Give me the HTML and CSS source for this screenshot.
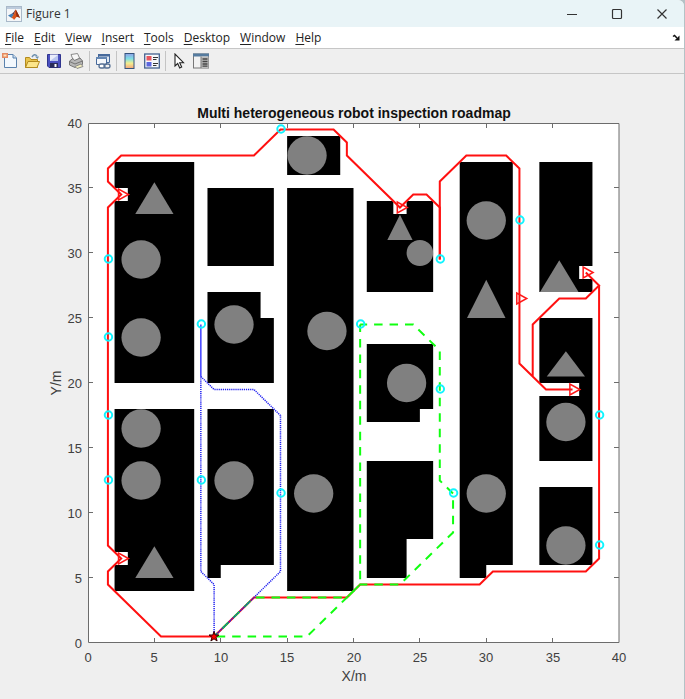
FILE: index.html
```html
<!DOCTYPE html>
<html lang="en">
<head>
<meta charset="utf-8">
<title>Figure 1</title>
<link rel="stylesheet" href="styles.css">
</head>
<body>
<div class="window">
  <header class="titlebar">
    <svg class="app-icon" viewBox="0 0 16 16" aria-hidden="true">
      <rect x=".5" y=".5" width="15" height="15" fill="#f4f6f8" stroke="#a9b9c9"/>
      <rect x="1" y="1" width="14" height="2" fill="#bccbdc"/>
      <path d="M2 9.5 6 7.5 8 9 5.5 12z" fill="#3f7eb4"/>
      <path d="M6 7.5Q8 6.500 9.500 3.500L8 9z" fill="#5a3a4c"/>
      <path d="M5.500 12Q8.500 8.500 9.500 3.500 11 5 14 12 12 10.500 10.500 11L8 14Q7.500 12 5.500 12z" fill="#d95319"/>
      <path d="M9.500 3.500Q11 5 14 12 11.500 10 10.500 10.500z" fill="#8c2c12"/>
    </svg>
    <h1 class="title">Figure 1</h1>
    <div class="window-controls">
      <button type="button" aria-label="Minimize"><svg viewBox="0 0 12 12"><path d="M1 6.500h10"/></svg></button>
      <button type="button" aria-label="Maximize"><svg viewBox="0 0 12 12"><rect x="1.500" y="1.500" width="9" height="9" rx="1"/></svg></button>
      <button type="button" aria-label="Close"><svg viewBox="0 0 12 12"><path d="M1.500 1.500l9 9M10.500 1.500l-9 9"/></svg></button>
    </div>
  </header>
  <nav class="menubar">
    <button type="button"><u>F</u>ile</button>
    <button type="button"><u>E</u>dit</button>
    <button type="button"><u>V</u>iew</button>
    <button type="button"><u>I</u>nsert</button>
    <button type="button"><u>T</u>ools</button>
    <button type="button"><u>D</u>esktop</button>
    <button type="button"><u>W</u>indow</button>
    <button type="button"><u>H</u>elp</button>
    <button type="button" class="dock" aria-label="Dock figure"><svg viewBox="0 0 8 8"><path d="M1 2.500 2.500 1.500 5 4" fill="none" stroke="#111" stroke-width="1.500"/><path d="M7.500 1.500V6.500H2.500z" fill="#111"/></svg></button>
  </nav>
  <div class="toolbar" role="toolbar" aria-label="Figure toolbar">
    <button type="button" aria-label="New figure"><svg viewBox="0 0 16 16">
      <path d="M2.500 1.500h8.500l3.500 3.500v9.500h-12z" fill="#f3f8fd" stroke="#5b82ad"/><path d="M11 1.500V5h3.500" fill="#c9dcee" stroke="#5b82ad"/>
      <path d="M0 0h6v5H0z" fill="#e58a62"/><path d="M1.500 1.500h3v2h-3z" fill="#ffe2b8"/></svg></button>
    <button type="button" aria-label="Open file"><svg viewBox="0 0 16 16">
      <path d="M1.500 14.500v-10h4l1.500 2h6.500v8z" fill="#e9c44c" stroke="#b38a1e"/><path d="M1.500 14.500 4 8.500h11.500l-2.500 6z" fill="#fce58a" stroke="#b38a1e"/>
      <path d="M8 4Q10.500 0 13 3" fill="none" stroke="#6d8fae" stroke-width="1.500"/><path d="M11 3.500h4L13.500 6z" fill="#6d8fae"/></svg></button>
    <button type="button" aria-label="Save figure"><svg viewBox="0 0 16 16">
      <path d="M1.500 1.500h13v13H3l-1.500-1.500z" fill="#4a50c0" stroke="#30358e"/><rect x="4" y="1.500" width="8" height="6.500" fill="#e9edfb"/><path d="M4 8 12 2v6z" fill="#b9c5ef"/>
      <rect x="4" y="10" width="8" height="4.500" fill="#292c59"/><rect x="8.500" y="11" width="2" height="3" fill="#fff"/></svg></button>
    <button type="button" aria-label="Print figure"><svg viewBox="0 0 16 16">
      <path d="M3 1.500 9.500.500 12 6 5.500 8z" fill="#f7f7f7" stroke="#8b8b8b"/><path d="M1.500 8 5 5.500l1.500 2L12 5l2.500 3v3.500L7 14.500 1.500 12z" fill="#b7b7b7" stroke="#777"/>
      <path d="M1.500 8.500 7 11l7.500-3" fill="none" stroke="#747474"/><path d="M7 13.500 13 11l2 2.500-6 2z" fill="#f3efc0" stroke="#8b8b8b"/></svg></button>
    <span class="separator"></span>
    <button type="button" aria-label="Link plot"><svg viewBox="0 0 16 16">
      <path d="M3.500 1.500h11v8h-11z" fill="#dfe8f2" stroke="#46699b"/><path d="M3 1h12v2.500H3z" fill="#46699b"/><path d="M1.500 4.500h10v7h-10z" fill="#f4f7fb" stroke="#46699b"/><path d="M1 4h11v2H1z" fill="#6386b3"/>
      <rect x="4" y="11" width="6" height="4" rx="2" fill="#fff" stroke="#536e93" stroke-width="1.300"/><rect x="9" y="11" width="6" height="4" rx="2" fill="none" stroke="#536e93" stroke-width="1.300"/></svg></button>
    <span class="separator"></span>
    <button type="button" aria-label="Insert colorbar"><svg viewBox="0 0 16 16">
      <defs><linearGradient id="bar" x1="0" y1="0" x2="0" y2="1"><stop offset="0" stop-color="#8fa0e8"/><stop offset=".35" stop-color="#7fe0e4"/><stop offset=".65" stop-color="#f3ee8e"/><stop offset="1" stop-color="#f3a27b"/></linearGradient></defs>
      <rect x="3" y=".5" width="9" height="15" fill="url(#bar)" stroke="#35537c"/></svg></button>
    <button type="button" aria-label="Insert legend"><svg viewBox="0 0 16 16">
      <rect x=".7" y="1" width="14.600" height="14" fill="#f7f9fc" stroke="#44618f" stroke-width="1.300"/><rect x="2.500" y="3" width="5" height="4.500" fill="#e8565e"/><rect x="2.500" y="9" width="5" height="4.500" fill="#5c66e0"/>
      <path d="M9 4.500h5M9 6.500h3.500M9 10.500h5M9 12.500h3.500" stroke="#333"/></svg></button>
    <span class="separator"></span>
    <button type="button" aria-label="Edit plot"><svg viewBox="0 0 16 16">
      <path d="M4 1v12l2.700-2.500 2 4.500 2-1-2-4.300H12.500z" fill="#fff" stroke="#222" stroke-width="1.100"/></svg></button>
    <button type="button" aria-label="Open property inspector"><svg viewBox="0 0 16 16">
      <rect x=".5" y="1" width="15" height="14" fill="#f1f1f1" stroke="#777"/><path d="M0 .500h16V3.500H0z" fill="#557b9f"/><path d="M8 3.500h7.500V15H8z" fill="#bdbdbd"/><path d="M8 3.500V15" stroke="#777"/>
      <path d="M9.500 6h5M9.500 8.500h5M9.500 11h5M9.500 13.200h5" stroke="#444" stroke-width="1.300"/></svg></button>
  </div>
  <main class="figure">
    <svg class="plot" viewBox="0 74 684 625" role="img" aria-label="Multi heterogeneous robot inspection roadmap">
      <defs>
        <ellipse id="waypoint" rx=".28" ry=".285"/>
        <path id="station" d="M-.2-.42V.42L.55 0z"/>
      </defs>
      <rect class="axes-area" x="88" y="123" width="531" height="520"/>
      <!-- Map content in metres, y axis pointing up -->
      <g transform="translate(88 643) scale(13.275 -13)">
        <g class="blocks">
          <path d="M2 20H8V37H2V35H3V34H2z"/>
          <path d="M2 4H8V18H2V7H3V6H2z"/>
          <path d="M9 29H14V35H9z"/>
          <path d="M9 20H14V25H13V27H9z"/>
          <path d="M9 5H10V6H14V18H9z"/>
          <path d="M15 36H19V39H15z"/>
          <path d="M15 4H20V35H15z"/>
          <path d="M21 27H26V34H24V33H23V34H21z"/>
          <path d="M21 17H25V18H26V23H21z"/>
          <path d="M21 5H24V8H26V14H21z"/>
          <path d="M28 5H30V6H32V37H28z"/>
          <path d="M34 27H38V28H37V29H38V37H34z"/>
          <path d="M34 14H38V25H34V20H37V19H34z"/>
          <path d="M34 6H38V12H34z"/>
        </g>
        <g class="equipment">
          <circle cx="16.500" cy="37.500" r="1.480"/><circle cx="4" cy="29.500" r="1.480"/><circle cx="4" cy="23.500" r="1.480"/>
          <circle cx="4" cy="16.500" r="1.480"/><circle cx="4" cy="12.500" r="1.480"/><circle cx="11" cy="24.500" r="1.480"/>
          <circle cx="11" cy="12.500" r="1.480"/><circle cx="18" cy="24" r="1.480"/><circle cx="17" cy="11.500" r="1.480"/>
          <circle cx="24" cy="20" r="1.480"/><circle cx="30" cy="32.500" r="1.480"/><circle cx="30" cy="11.500" r="1.480"/>
          <circle cx="36" cy="17" r="1.480"/><circle cx="36" cy="7.500" r="1.480"/><circle cx="25" cy="30" r="1"/>
          <path d="M5 35.450 6.440 33H3.560z"/><path d="M5 7.450 6.440 5H3.560z"/><path d="M23.500 32.950 24.450 31H22.550z"/>
          <path d="M30 27.950 31.450 25H28.550z"/><path d="M35.500 29.450 36.950 27H34.050z"/><path d="M36 22.450 37.440 20.500H34.560z"/>
        </g>
        <path class="route red" d="M9.500.500H5.500L1.500 4.500V5.500L2.500 6.500 1.500 7.500V33.500L2.500 34.500 1.500 35.500V36.500L2.500 37.500H12.500L14.500 39.500H18.500L19.500 38.500V37.500L23.500 33.500 24.500 34.500H25.500L26.500 33.500V29.500"/>
        <path class="route red" d="M26.500 29.500V35.500L28.500 37.500H31.500L32.500 36.500V21.500L34.500 19.500H36.500M33.500 20.500V24.500L35.500 26.500H37.500L38.500 27.500 37.500 28.500"/>
        <path class="route red" d="M38.500 27.500V6.500L37.500 5.500H30.500L29.500 4.500H20.500L19.500 3.500H12.500L9.500.500"/>
        <path class="route green out" d="M9.500.500H16.500L20.500 4.500V24.500"/>
        <path class="route green back" d="M20.500 24.500H24.500L26.500 22.500V12.500L27.500 11.500V8.500L23.500 4.500H20.500L19.500 3.500H12.500L9.500.500"/>
        <path class="route blue" d="M9.500.500V4.500L8.500 5.500V20.500"/>
        <path class="route blue" d="M8.500 20.500 9.500 19.500H12.500L14.500 17.500V5.500L12.500 3.500 9.500.500"/>
        <path class="route blue doubled" d="M8.500 24.500V20.500"/>
        <g class="stations">
          <use href="#station" x="2.500" y="34.500"/><use href="#station" x="2.500" y="6.500"/><use href="#station" x="23.500" y="33.500"/>
          <use href="#station" x="32.500" y="26.500"/><use href="#station" x="36.500" y="19.500"/><use href="#station" x="37.500" y="28.500"/>
        </g>
        <g class="waypoints">
          <use href="#waypoint" x="14.540" y="39.540"/><use href="#waypoint" x="1.540" y="29.540"/><use href="#waypoint" x="1.540" y="23.540"/>
          <use href="#waypoint" x="1.540" y="17.540"/><use href="#waypoint" x="1.540" y="12.540"/><use href="#waypoint" x="8.540" y="24.540"/>
          <use href="#waypoint" x="8.540" y="12.540"/><use href="#waypoint" x="14.540" y="11.540"/><use href="#waypoint" x="20.540" y="24.540"/>
          <use href="#waypoint" x="26.540" y="29.540"/><use href="#waypoint" x="26.540" y="19.540"/><use href="#waypoint" x="27.540" y="11.540"/>
          <use href="#waypoint" x="32.540" y="32.540"/><use href="#waypoint" x="38.540" y="17.540"/><use href="#waypoint" x="38.540" y="7.540"/>
        </g>
      </g>
      <path class="start" d="M214 631.500l1.200 3.500h3.800l-3 2.300 1.100 3.700-3.100-2.200-3.100 2.200 1.100-3.700-3-2.300h3.800z"/>
      <path class="ticks" d="M88.500 123.500h530.500v519h-530.500zM154.500 123v5m0 510v5M220.500 123v5m0 510v5M287.500 123v5m0 510v5M353.500 123v5m0 510v5M419.500 123v5m0 510v5M486.500 123v5m0 510v5M552.500 123v5m0 510v5M88 577.500h5m521 0h5M88 512.500h5m521 0h5M88 447.500h5m521 0h5M88 382.500h5m521 0h5M88 317.500h5m521 0h5M88 252.500h5m521 0h5M88 187.500h5m521 0h5"/>
      <text class="plot-title" x="354" y="118">Multi heterogeneous robot inspection roadmap</text>
      <g class="x-labels">
        <text x="88" y="662">0</text><text x="154" y="662">5</text><text x="221" y="662">10</text><text x="287" y="662">15</text><text x="354" y="662">20</text>
        <text x="420" y="662">25</text><text x="486" y="662">30</text><text x="553" y="662">35</text><text x="619" y="662">40</text>
      </g>
      <g class="y-labels">
        <text x="82" y="648">0</text><text x="82" y="583">5</text><text x="82" y="518">10</text><text x="82" y="453">15</text><text x="82" y="388">20</text>
        <text x="82" y="323">25</text><text x="82" y="258">30</text><text x="82" y="193">35</text><text x="82" y="128">40</text>
      </g>
      <text class="axis-name" x="354" y="681">X/m</text>
      <text class="axis-name" transform="translate(61 383) rotate(-90)">Y/m</text>
    </svg>
  </main>
</div>
</body>
</html>
```
FILE: styles.css
```css
* { box-sizing: border-box; }

body {
  margin: 0;
  padding-right: 1px;
  background: #b4c2c6;
  font-family: "Open Sans", "Noto Sans", sans-serif;
  font-size: 12px;
  color: #222;
}

button {
  margin: 0;
  padding: 0;
  border: 0;
  background: none;
  color: inherit;
  font: inherit;
}

button svg { display: block; }

.window {
  min-height: 100vh;
  background: #efefef;
  border-top-right-radius: 6px;
  overflow: hidden;
}

.titlebar {
  display: flex;
  align-items: center;
  height: 27px;
  padding-left: 6px;
  background: #e9f4f7;
}

.app-icon { width: 16px; height: 16px; }

.title {
  flex: 1;
  margin: 0 0 0 4px;
  font-size: 12px;
  font-weight: 400;
  color: #333;
}

.window-controls { display: flex; }

.window-controls button {
  display: grid;
  place-items: center;
  width: 45px;
  height: 27px;
}

.window-controls svg {
  width: 12px;
  height: 12px;
  fill: none;
  stroke: #333;
  stroke-width: 1.2;
}

.menubar {
  display: flex;
  align-items: center;
  gap: 10px;
  height: 21px;
  padding: 0 4px 0 5px;
  background: #fff;
}

.menubar u { text-underline-offset: 2px; }

.dock { margin-left: auto; }
.dock svg { width: 8px; height: 8px; }

.toolbar {
  display: flex;
  align-items: center;
  gap: 2px;
  height: 26px;
  border-top: 1px solid #c6c6c6;
  border-bottom: 1px solid #c6c6c6;
}

.toolbar button {
  display: grid;
  place-items: center;
  width: 20px;
  height: 22px;
}

.toolbar svg { width: 16px; height: 16px; }

.separator {
  width: 1px;
  height: 20px;
  margin: 0 1px;
  background: #c4c4c4;
}

.plot {
  display: block;
  width: 100%;
  height: auto;
  font-family: "Liberation Sans", Arial, sans-serif;
}

.axes-area { fill: #fff; }
.blocks { fill: #000; }
.equipment { fill: #808080; }

.route {
  fill: none;
  stroke-width: 2;
  vector-effect: non-scaling-stroke;
}

.red { stroke: #ff1010; }
.green { stroke: #10ff10; stroke-dasharray: 8.5 6.95; }
.out { stroke-dashoffset: -2.6; }
.back { stroke-dashoffset: 1.5; }
.blue { stroke: #2020f0; stroke-width: 1.5; stroke-dasharray: 1.2 0.9; }
.doubled { stroke: #4040ff; stroke-dasharray: none; }

#station, #waypoint { fill: none; vector-effect: non-scaling-stroke; }
.stations { stroke: #ff1818; stroke-width: 1.5; }
.waypoints { stroke: #10f4ff; stroke-width: 2; }

.start { fill: #f00; stroke: #300; stroke-width: 1; }

.ticks { fill: none; stroke: #6c6c6c; stroke-width: 1; }

.plot-title {
  font-size: 14px;
  font-weight: 700;
  text-anchor: middle;
  fill: #111;
}

.x-labels, .y-labels { font-size: 13px; fill: #404040; }
.x-labels { text-anchor: middle; }
.y-labels { text-anchor: end; }

.axis-name {
  font-size: 14px;
  text-anchor: middle;
  fill: #404040;
}
```
